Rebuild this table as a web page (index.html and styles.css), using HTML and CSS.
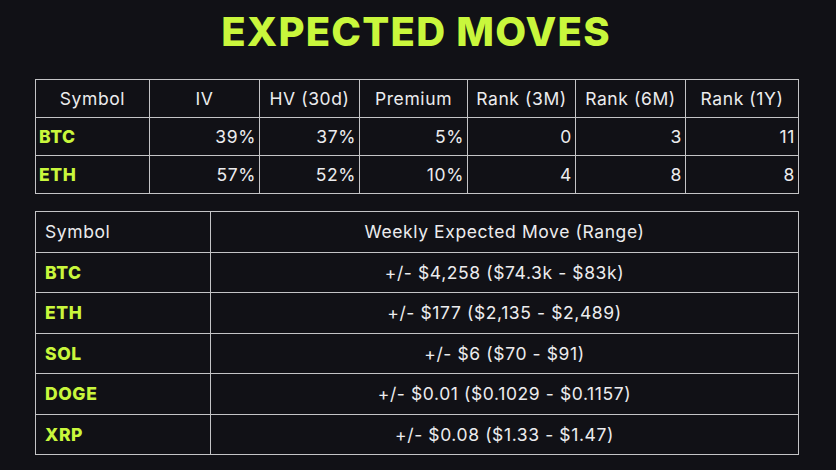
FILE: index.html
```html
<!DOCTYPE html>
<html>
<head>
<meta charset="utf-8">
<link rel="stylesheet" href="styles.css">
</head>
<body>
<div class="page">
  <h1 class="title">EXPECTED MOVES</h1>
  <table class="grid grid-vol">
    <colgroup>
      <col class="c1"><col class="c2"><col class="c3"><col class="c4"><col class="c5"><col class="c6"><col class="c7">
    </colgroup>
    <thead>
      <tr><th>Symbol</th><th>IV</th><th>HV (30d)</th><th>Premium</th><th>Rank (3M)</th><th>Rank (6M)</th><th>Rank (1Y)</th></tr>
    </thead>
    <tbody>
      <tr><td class="sym">BTC</td><td>39%</td><td>37%</td><td>5%</td><td>0</td><td>3</td><td>11</td></tr>
      <tr><td class="sym">ETH</td><td>57%</td><td>52%</td><td>10%</td><td>4</td><td>8</td><td>8</td></tr>
    </tbody>
  </table>
  <table class="grid grid-move">
    <colgroup><col class="m1"><col class="m2"></colgroup>
    <thead>
      <tr><th class="left">Symbol</th><th>Weekly Expected Move (Range)</th></tr>
    </thead>
    <tbody>
      <tr><td class="sym">BTC</td><td>+/- $4,258 ($74.3k - $83k)</td></tr>
      <tr><td class="sym">ETH</td><td>+/- $177 ($2,135 - $2,489)</td></tr>
      <tr><td class="sym">SOL</td><td>+/- $6 ($70 - $91)</td></tr>
      <tr><td class="sym">DOGE</td><td>+/- $0.01 ($0.1029 - $0.1157)</td></tr>
      <tr><td class="sym">XRP</td><td>+/- $0.08 ($1.33 - $1.47)</td></tr>
    </tbody>
  </table>
</div>
</body>
</html>
```
FILE: styles.css
```css
html, body {
  margin: 0;
  padding: 0;
  background: #111116;
}
.page {
  width: 836px;
  height: 470px;
  box-sizing: border-box;
  padding: 12px 0 0 35px;
  font-family: Inter, "Noto Sans", sans-serif;
  color: #ececee;
}
.title {
  margin: 0 0 28px 0;
  width: 762px;
  text-align: center;
  font-size: 40px;
  line-height: 39px;
  font-weight: 800;
  color: #c9f73c;
  letter-spacing: 1.2px;
}
.grid {
  border-collapse: collapse;
  table-layout: fixed;
  width: 763px;
  font-size: 17.5px;
  letter-spacing: 0.6px;
}
.grid th, .grid td {
  border: 1px solid #c4c4c6;
  padding: 0 3px;
  font-weight: 400;
  white-space: nowrap;
  overflow: hidden;
}
.grid-vol th, .grid-vol td { height: 37px; }
.grid-vol th { text-align: center; }
.grid-vol td { text-align: right; }
.grid-vol .c1 { width: 114px; }
.grid-vol .c2 { width: 110px; }
.grid-vol .c3 { width: 100px; }
.grid-vol .c4 { width: 108px; }
.grid-vol .c5 { width: 108px; }
.grid-vol .c6 { width: 110px; }
.grid-vol .c7 { width: 113px; }
.grid .sym {
  text-align: left;
  color: #c9f73c;
  font-weight: 800;
}
.grid-move { margin-top: 17px; }
.grid-move .m1 { width: 175px; }
.grid-move .m2 { width: 588px; }
.grid-move th, .grid-move td {
  height: 39.5px;
  text-align: center;
  padding: 0 9px;
}
.grid-move .left, .grid-move .sym { text-align: left; }
```
